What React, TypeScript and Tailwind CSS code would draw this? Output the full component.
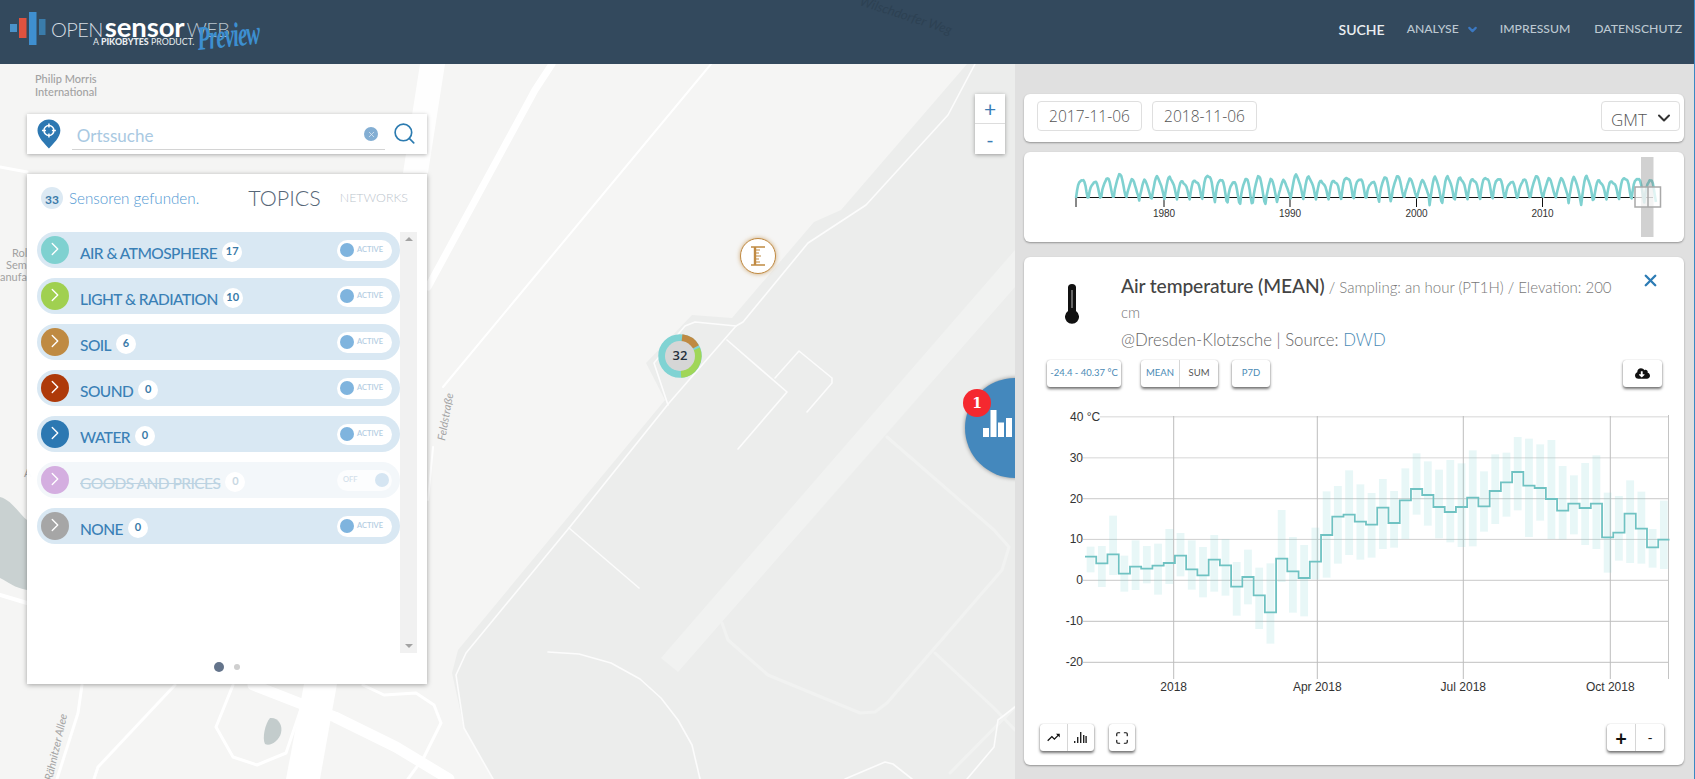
import React from 'react';
import { ChevronDown, ChevronRight, Maximize, Search, X } from 'lucide-react';
import { FaCloudDownloadAlt } from 'react-icons/fa';
import { MdTrendingUp } from 'react-icons/md';

const topics = [
  { name: 'AIR & ATMOSPHERE', count: 17, color: '#7fd1d0' },
  { name: 'LIGHT & RADIATION', count: 10, color: '#a0d050' },
  { name: 'SOIL', count: 6, color: '#bf8a42' },
  { name: 'SOUND', count: 0, color: '#ae3a0a' },
  { name: 'WATER', count: 0, color: '#2c78b2' },
  { name: 'GOODS AND PRICES', count: 0, color: '#d4aee0', off: true },
  { name: 'NONE', count: 0, color: '#a6a6a6' },
];

// values read off the reference, in zoomed pixels (y = 410 + v / 3)
const steps = [437, 457, 430, 488, 467, 473, 464, 456, 434, 475, 493, 446, 463, 527, 498, 553, 604, 443, 481, 501, 452, 372, 317, 311, 332, 341, 290, 336, 268, 234, 252, 288, 303, 288, 260, 286, 240, 214, 183, 224, 231, 264, 299, 278, 291, 278, 379, 365, 308, 353, 409, 386];
const ranges = [[407, 484], [405, 528], [314, 492], [434, 542], [388, 537], [405, 517], [398, 551], [354, 519], [366, 496], [388, 536], [408, 559], [372, 542], [384, 554], [453, 614], [416, 580], [470, 654], [457, 698], [297, 513], [378, 605], [402, 616], [350, 505], [241, 500], [225, 458], [178, 432], [220, 446], [246, 440], [204, 414], [240, 410], [172, 384], [127, 311], [151, 344], [176, 382], [147, 394], [157, 408], [118, 406], [181, 362], [130, 339], [125, 317], [78, 298], [83, 378], [100, 329], [87, 384], [165, 385], [193, 370], [156, 402], [133, 414], [245, 485], [255, 449], [208, 456], [242, 458], [354, 470], [269, 474]];

const binX = (i: number) => 1085 + i * 11.24;
const zy = (v: number) => 410 + v / 3;

const stepPath = () => {
  let d = `M${binX(0)} ${zy(steps[0])}`;
  steps.forEach((v, i) => {
    d += ` V${zy(v)} H${binX(i + 1)}`;
  });
  return d;
};

const overviewPath = () => {
  const deep: Record<number, number> = { 5: 201, 11: 202, 12: 203, 13: 205, 14: 204, 15: 205, 24: 203, 28: 205, 29: 202, 39: 203, 40: 204, 45: 203 };
  // one yearly hump, as fractions of its height, month by month
  const shape = [0, 0.35, 0.6, 0.8, 0.92, 1, 0.95, 0.9, 0.78, 0.6, 0.35, 0.1];
  const pts: string[] = [];
  for (let y = 0; y < 46; y++) {
    const peak = 179 + 2.5 * Math.sin(y * 1.7) + (y % 7 === 3 ? -2 : 0) + (y === 30 ? -3 : 0);
    const low = deep[y] || 198;
    shape.forEach((s, m) => {
      const jitter = Math.sin(y * 12 + m * 5.3) * 1.4;
      pts.push(`${(1076 + (y + m / 12) * 12.63).toFixed(1)},${(low + (peak - low) * s + jitter).toFixed(1)}`);
    });
  }
  return pts.join(' ');
};

const Logo = () => (
  <div className="relative flex items-center h-16 w-[300px]">
    <svg width="46" height="64" viewBox="0 0 46 64" className="absolute left-0 top-0">
      <rect x="10" y="24" width="7" height="8" fill="#4a92c9" />
      <rect x="19" y="18" width="7.5" height="20" fill="#e0523f" />
      <rect x="29" y="12" width="7.5" height="33" fill="#3f8fd0" />
      <rect x="39" y="19" width="6.5" height="16" fill="#3a7cab" />
    </svg>
    <div className="absolute left-[51px] top-[12px] flex items-baseline text-white font-['Lato',sans-serif] whitespace-nowrap">
      <span className="text-[20px] font-light text-[#d5dde3] tracking-[-0.6px]">OPEN</span>
      <span className="ml-[2px] text-[27.5px] font-bold leading-[30px] tracking-[-0.1px]">sensor</span>
      <span className="ml-[2px] text-[20px] font-light text-[#b9c5ce] tracking-[-0.6px]">WEB</span>
    </div>
    <div className="absolute left-[93px] top-[36px] text-[8.8px] leading-[12px] text-[#e8edf0] font-['Lato',sans-serif] whitespace-nowrap">
      A <b className="font-black">PIKOBYTES</b> PRODUCT.
    </div>
    <div className="absolute left-[197px] top-[20px] origin-left text-[34px] leading-[38px] text-[#3d8fd0] font-['Liberation_Serif',serif] italic font-bold tracking-[-1.5px] scale-x-[0.62] -rotate-6 whitespace-nowrap">
      Preview
    </div>
  </div>
);

const Header = () => (
  <header className="relative h-16 shrink-0 bg-[#33495d] flex items-start justify-between pl-0 pr-[13px] font-['Lato',sans-serif] overflow-hidden">
    <Logo />
    <span className="absolute left-[858px] top-[6px] rotate-[18deg] text-[13px] italic text-[#2d4153]">Wilschdorfer Weg</span>
    <nav className="flex items-center h-[58px] text-[12.2px] font-medium text-[#bcc8d1] whitespace-nowrap">
      <span className="text-[14px] text-[#eaeef1] font-semibold">SUCHE</span>
      <span className="ml-[22px]">ANALYSE</span>
      <ChevronDown size={13} strokeWidth={4} className="ml-[7px] mt-[1px] text-[#3b78c2]" />
      <span className="ml-[21px]">IMPRESSUM</span>
      <span className="ml-[24px]">DATENSCHUTZ</span>
    </nav>
  </header>
);

const MapBackground = () => (
  <svg viewBox="0 64 1015 715" width="1015" height="715" className="absolute inset-0" fill="none" strokeLinejoin="round" strokeLinecap="round">
    <rect x="0" y="64" width="1015" height="715" fill="#f5f5f4" />
    <polygon points="967,64 841,210 814,222 732,318 692,315 646,363 665,400 458,650 452,673 464,728 493,779 1015,779 1015,64" fill="#ecedec" />
    <polygon points="661,658 678,672 1015,287 1015,250" fill="#f1f2f1" />
    <g stroke="#f1f2f1" strokeWidth="3">
      <polyline points="722,623 728,640 768,675 860,713 875,712 887,703 1002,570 1009,547 994,530 887,437" />
      <polyline points="935,653 994,708 1015,730" />
      <polyline points="950,773 1015,707" />
    </g>
    <g stroke="#fcfcfc" strokeWidth="1.6">
      <polyline points="975,64 948,115 866,205 808,243 743,322 736,326 669,403 569,528 466,653 456,675 464,728 493,779" />
      <polyline points="736,326 695,322 685,326 654,363 668,405" />
      <polyline points="727,340 787,392 738,449" />
      <polyline points="775,378 799,351 832,378 832,383 807,412" />
      <polyline points="569,528 639,588" />
      <polyline points="548,652 579,654 611,663 640,679 661,698 678,720 692,745 700,779" />
      <polyline points="845,779 885,762 893,764 912,779" />
      <polyline points="1015,707 998,720 994,747 967,779" />
    </g>
    <g stroke="#ffffff" strokeWidth="2">
      <polyline points="711,64 443,387" />
      <polyline points="433,447 428,500" />
      <polyline points="0,167 27,172" strokeWidth="3" />
      <polyline points="0,595 27,603" strokeWidth="4" />
      <polyline points="82,685 78,713 57,779" strokeWidth="3" />
      <polyline points="175,685 98,767 94,779" strokeWidth="3" />
      <polyline points="233,685 216,727 233,757 257,765 286,753 304,700" strokeWidth="3" />
      <polyline points="363,685 384,695 416,693 434,705 441,723 424,757 408,779" strokeWidth="3" />
    </g>
    <polygon points="420,64 445,64 428,173 403,173" fill="#ffffff" opacity="0.9" />
    <polyline points="552,64 535,90 428,287" stroke="#ffffff" strokeWidth="7" />
    <polygon points="304,684 337,684 320,779 286,779" fill="#ffffff" />
    <polyline points="253,685 335,717 396,747 449,779" stroke="#ffffff" strokeWidth="11" />
    <path d="M0 497 C12 500 20 515 27 520 L27 590 C15 588 8 582 0 578 Z" fill="#c9d1d1" />
    <path d="M270 718 C278 717 283 725 281 733 C279 741 270 747 265 744 C262 738 265 724 270 718 Z" fill="#c3cccc" />
    <g fontFamily="'Lato',sans-serif" fontSize="11" fill="#a2a2a2">
      <text x="35" y="83" fontWeight="500">Philip Morris</text>
      <text x="35" y="96" fontWeight="500">International</text>
      <text x="12" y="257">Rol</text>
      <text x="6" y="269">Sem</text>
      <text x="0" y="281">anufa</text>
      <text x="24" y="477">A</text>
      <text transform="translate(445 441) rotate(-80)" fontStyle="italic" fill="#a4a4a4">Feldstraße</text>
      <text transform="translate(52 781) rotate(-77)" fontStyle="italic" fill="#a4a4a4">Rähnitzer Allee</text>
    </g>
  </svg>
);

const PinIcon = () => (
  <svg width="24" height="30" viewBox="0 0 24 30">
    <path d="M12 0.5 C18.5 0.5 23.5 5.5 23.5 11.5 C23.5 18.5 16 25 12 29.5 C8 25 0.5 18.5 0.5 11.5 C0.5 5.5 5.5 0.5 12 0.5 Z" fill="#2d78b2" />
    <circle cx="12" cy="11.5" r="5" fill="none" stroke="#fff" strokeWidth="1.5" />
    <path d="M12 4.5 V8.5 M12 14.5 V18.5 M5 11.5 H9 M15 11.5 H19" stroke="#fff" strokeWidth="1.5" />
  </svg>
);

const SearchBox = () => (
  <div className="absolute left-[27px] top-[50px] w-[400px] h-10 bg-white shadow-[0_1px_4px_rgba(0,0,0,0.3)] flex items-start pl-[10px] pr-[10px] pt-[5px]">
    <PinIcon />
    <div className="ml-[11px] w-[315px] h-[31px] border-b border-[#d4d4d4] flex items-center justify-between pl-[5px] pr-[7px]">
      <span className="text-[17px] text-[#a9c9e2] font-['Lato',sans-serif] pt-[3px]">Ortssuche</span>
      <span className="w-[14px] h-[14px] rounded-full bg-[#83aed3] flex items-center justify-center">
        <X size={9} strokeWidth={2} className="text-[#dfeaf3]" />
      </span>
    </div>
    <Search size={25} strokeWidth={1.6} className="ml-[7px] mt-[2px] text-[#2c7bb0]" />
  </div>
);

const TopicRow = ({ name, count, color, off }: { name: string; count: number; color: string; off?: boolean }) => (
  <div className={`h-9 rounded-full flex items-center pl-1 pr-2 ${off ? 'bg-[#f3f7fa]' : 'bg-[#d9e8f3]'}`}>
    <span className="w-7 h-7 rounded-full flex items-center justify-center shrink-0 pr-[1px] -mt-[1px]" style={{ backgroundColor: color }}>
      <ChevronRight size={22} strokeWidth={1.5} className="text-white -mt-[2px]" />
    </span>
    <span className={`ml-[11px] mt-[7px] text-[15.5px] font-medium tracking-[-0.55px] whitespace-nowrap ${off ? 'text-[#bcd3e2] line-through' : 'text-[#3a80b6]'}`}>{name}</span>
    <span className={`ml-[5px] mt-[3px] w-5 h-5 rounded-full bg-white flex items-center justify-center text-[11px] font-bold ${off ? 'text-[#c9d8e3]' : 'text-[#3a7aa8]'}`}>{count}</span>
    {off ? (
      <span className="ml-auto w-[55px] h-[21px] rounded-full bg-white/70 flex items-center justify-between pl-[6px] pr-[3px]">
        <span className="text-[7.5px] font-semibold text-[#d3e0ea]">OFF</span>
        <span className="w-[14px] h-[14px] rounded-full bg-[#d5e5f2]" />
      </span>
    ) : (
      <span className="ml-auto w-[55px] h-[21px] rounded-full bg-white flex items-center pl-[3px]">
        <span className="w-[14px] h-[14px] rounded-full bg-[#7fb4de]" />
        <span className="ml-[3px] text-[7.5px] font-semibold text-[#b3cde2]">ACTIVE</span>
      </span>
    )}
  </div>
);

const TopicsPanel = () => (
  <div className="absolute left-[27px] top-[110px] w-[400px] h-[510px] bg-white/[0.97] shadow-[0_1px_5px_rgba(0,0,0,0.35)] font-['Lato',sans-serif] flex flex-col">
    <div className="h-12 mb-[10px] flex items-center pl-[14px] whitespace-nowrap">
      <span className="w-[22px] h-[22px] rounded-full bg-[#dce9f3] flex items-center justify-center text-[12px] font-bold text-[#3a7aa8] pt-[3px]">33</span>
      <span className="ml-[6px] text-[15.2px] font-light text-[#4f97d2]">Sensoren gefunden.</span>
      <span className="ml-[49px] text-[21.5px] font-light text-[#566677]">TOPICS</span>
      <span className="ml-[19px] text-[12.4px] font-light text-[#bcc5cd]">NETWORKS</span>
    </div>
    <div className="flex pl-[10px] pr-[10px]">
      <div className="w-[363px] flex flex-col gap-[10px]">
        {topics.map((t) => (
          <TopicRow key={t.name} {...t} />
        ))}
      </div>
      <div className="w-[17px] h-[421px] bg-[#f1f1f1] flex flex-col items-center justify-between py-[5px]">
        <span className="w-0 h-0 border-x-[4px] border-x-transparent border-b-[4px] border-b-[#a3a3a3]" />
        <span className="w-0 h-0 border-x-[4px] border-x-transparent border-t-[4px] border-t-[#a3a3a3]" />
      </div>
    </div>
    <div className="flex-1 flex items-center justify-center gap-[10px] pb-[4px]">
      <span className="w-[10px] h-[10px] rounded-full bg-[#64748b]" />
      <span className="w-[6px] h-[6px] rounded-full bg-[#cfcfcf]" />
    </div>
  </div>
);

const Markers = () => (
  <>
    <div className="absolute left-[740px] top-[174px] w-9 h-9 rounded-full bg-white border border-[#c08a42] shadow-[0_0_4px_rgba(192,138,66,0.7)] flex items-center justify-center">
      <svg width="16" height="20" viewBox="0 0 16 20" stroke="#c08a42" fill="none">
        <path d="M1 1 H15 M1 19 H15" strokeWidth="1.6" />
        <path d="M5 1 V19" strokeWidth="2.4" />
        <path d="M6 4 H10 M6 7 H9 M6 10 H11 M6 13 H9 M6 16 H10" strokeWidth="1.2" />
      </svg>
    </div>
    <div className="absolute left-[658px] top-[270px] w-11 h-11">
      <svg width="44" height="44" viewBox="0 0 44 44" fill="none" strokeWidth="7.5">
        <circle cx="22" cy="22" r="18" stroke="#80d3d3" />
        <path d="M24 4.1 A18 18 0 0 1 37.6 13" stroke="#bf8a42" />
        <path d="M38.3 15 A18 18 0 0 1 23 40" stroke="#a0d658" />
      </svg>
      <span className="absolute inset-[7px] rounded-full bg-[#d6d6d6] flex items-center justify-center text-[13px] font-semibold text-[#24303c] font-['Open_Sans',sans-serif]">32</span>
    </div>
    <div className="absolute left-[965px] top-[314px] w-[100px] h-[100px] rounded-full bg-[#4488bd] shadow-[0_0_4px_rgba(0,0,0,0.4)]">
      <svg width="32" height="28" viewBox="0 0 32 28" fill="#fff" className="absolute left-[18px] top-[32px]">
        <rect x="0" y="18" width="6" height="9" />
        <rect x="7.5" y="0" width="6" height="27" />
        <rect x="15" y="12.5" width="6" height="14.5" />
        <rect x="23" y="8" width="6" height="19" />
      </svg>
    </div>
    <span className="absolute left-[963px] top-[325px] w-7 h-7 rounded-full bg-[#f5282f] flex items-center justify-center text-white text-[14px] font-bold font-['DejaVu_Serif',serif]">1</span>
    <div className="absolute left-[975px] top-[30px] w-[30px] h-[60px] bg-white shadow-[0_1px_4px_rgba(0,0,0,0.35)] flex flex-col text-[#3a7cb5] font-['Lato',sans-serif]">
      <span className="h-[30px] border-b border-[#dddddd] flex items-center justify-center text-[21px]">+</span>
      <span className="flex-1 flex items-center justify-center text-[20px]">-</span>
    </div>
  </>
);

const Card = ({ className, children }: { className: string; children: React.ReactNode }) => (
  <div className={`bg-white rounded-[6px] shadow-[0_1px_2px_rgba(0,0,0,0.35)] ${className}`}>{children}</div>
);

const DateBar = () => (
  <Card className="h-12 flex items-start pt-[7px] pl-[13px] pr-[4px] font-['Open_Sans',sans-serif] font-light text-[#555]">
    <span className="w-[105px] h-[30px] border border-[#dfdfdf] rounded-[4px] flex items-center justify-center pt-[2px] text-[15.5px]">2017-11-06</span>
    <span className="ml-[10px] w-[105px] h-[30px] border border-[#dfdfdf] rounded-[4px] flex items-center justify-center pt-[2px] text-[15.5px]">2018-11-06</span>
    <span className="ml-auto w-[79px] h-[30px] border border-[#dfdfdf] rounded-[4px] flex items-center justify-center gap-[7px] pl-[4px] pt-[7px] text-[17px]">
      GMT
      <ChevronDown size={20} strokeWidth={2.4} className="text-[#333] -mt-[4px]" />
    </span>
  </Card>
);

const Overview = () => (
  <Card className="h-[90px]">
    <svg viewBox="1024 152 660 90" width="660" height="90" fill="none">
      <path d="M1076 197.5 H1653 M1076 197.5 V207 M1164 197.5 V207 M1290 197.5 V207 M1416.5 197.5 V207 M1542.5 197.5 V207" stroke="#111" strokeWidth="1" />
      <polyline points={overviewPath()} stroke="#7fd1d0" strokeWidth="2.6" strokeLinejoin="round" />
      <g fontFamily="'Liberation Sans',sans-serif" fontSize="10" fill="#333" textAnchor="middle">
        <text x="1164" y="217">1980</text>
        <text x="1290" y="217">1990</text>
        <text x="1416.5" y="217">2000</text>
        <text x="1542.5" y="217">2010</text>
      </g>
      <rect x="1641" y="157" width="12.5" height="80" fill="#7a7a7a" opacity="0.35" />
      <rect x="1635" y="187" width="25.5" height="20" fill="#ffffff" fillOpacity="0.75" stroke="#a9a9a9" strokeWidth="1.5" />
      <path d="M1648 187 V207" stroke="#a9a9a9" strokeWidth="1.5" />
    </svg>
  </Card>
);

const Thermometer = () => (
  <svg width="14" height="40" viewBox="0 0 14 40">
    <path d="M3 3.5 A4 3.5 0 0 1 11 3.5 V27 A7 7 0 1 1 3 27 Z" fill="#111" />
    <path d="M7 6 V24" stroke="#cfcfcf" strokeWidth="0.9" />
  </svg>
);

const ChartButton = ({ className, children }: { className: string; children: React.ReactNode }) => (
  <div className={`h-[27px] bg-white rounded-[3px] shadow-[0_2px_3px_rgba(0,0,0,0.55),0_0_1px_rgba(0,0,0,0.3)] flex items-center justify-center ${className}`}>{children}</div>
);

const Chart = () => {
  const yTicks = [
    { label: '30', y: 456.7, c: '#e4e4e4', w: 1.5 },
    { label: '20', y: 497.7, c: '#d4d4d4', w: 1.2 },
    { label: '10', y: 538.4, c: '#cfcfcf', w: 1 },
    { label: '0', y: 579.3, c: '#c8c8c8', w: 1 },
    { label: '-10', y: 620.3, c: '#c0c0c0', w: 1 },
    { label: '-20', y: 661.3, c: '#c0c0c0', w: 1 },
  ];
  const xTicks = [
    { label: '2018', x: 1173.7 },
    { label: 'Apr 2018', x: 1317.3 },
    { label: 'Jul 2018', x: 1463.3 },
    { label: 'Oct 2018', x: 1610.3 },
  ];
  return (
    <svg viewBox="1024 400 660 300" width="660" height="300" fill="none" className="mt-[14px]">
      <path d="M1100 415.7 H1668" stroke="#e4e4e4" strokeWidth="1.5" />
      {yTicks.map((t) => (
        <path key={t.label} d={`M1083 ${t.y} H1668`} stroke={t.c} strokeWidth={t.w} />
      ))}
      {xTicks.map((t) => (
        <path key={t.label} d={`M${t.x} 415 V678`} stroke="#bdbdbd" />
      ))}
      <path d="M1668.5 414 V678" stroke="#c4c4c4" />
      {ranges.map(([a, b], i) => (
        <rect key={i} x={binX(i) + 1.7} y={zy(a)} width="7.8" height={(b - a) / 3} fill="#7fd1d0" opacity="0.18" />
      ))}
      <path d={stepPath()} stroke="#6fc2c2" strokeWidth="1.8" />
      <g fontFamily="'Liberation Sans',sans-serif" fontSize="12" fill="#333">
        <text x="1070" y="420">40 °C</text>
        {yTicks.map((t) => (
          <text key={t.label} x="1083" y={t.y + 4} textAnchor="end">{t.label}</text>
        ))}
        {xTicks.map((t) => (
          <text key={t.label} x={t.x} y="690" textAnchor="middle">{t.label}</text>
        ))}
      </g>
    </svg>
  );
};

const DetailCard = () => (
  <Card className="h-[508px] relative flex flex-col font-['Lato',sans-serif]">
    <div className="flex pl-[41px] pt-[16px] h-[103px]">
      <div className="mt-[11px]"><Thermometer /></div>
      <div className="ml-[42px] w-[495px] leading-[25px] text-[#777]">
        <div className="text-[15px] font-light">
          <span className="text-[19.2px] font-medium text-[#444] tracking-[-0.1px]">Air temperature (MEAN)</span> / Sampling: an hour (PT1H) / Elevation: 200 cm
        </div>
        <div className="mt-[2px] text-[16.8px] font-light text-[#666]">
          @Dresden-Klotzsche | Source: <span className="text-[#4a8ab5]">DWD</span>
        </div>
      </div>
      <X size={19} strokeWidth={3} className="absolute left-[617px] top-[14px] text-[#2d7cb5]" />
    </div>
    <div className="flex pl-[23px] pr-[22px] text-[9.5px] font-['Lato',sans-serif]">
      <ChartButton className="w-[74px] text-[#4a8ab5]">-24.4 - 40.37 °C</ChartButton>
      <ChartButton className="ml-[20px] w-[77px]">
        <span className="flex-1 h-full flex items-center justify-center border-r border-[#d6d6d6] text-[#4a8ab5]">MEAN</span>
        <span className="flex-1 text-center text-[#555]">SUM</span>
      </ChartButton>
      <ChartButton className="ml-[14px] w-[38px] text-[#4a8ab5]">P7D</ChartButton>
      <ChartButton className="ml-auto w-[39px]"><FaCloudDownloadAlt size={15} className="text-[#111]" /></ChartButton>
    </div>
    <Chart />
    <div className="flex pl-4 pr-5 mt-[23px]">
      <ChartButton className="w-[54px]">
        <span className="flex-1 h-full flex items-center justify-center border-r border-[#d6d6d6]"><MdTrendingUp size={15} className="text-[#111]" /></span>
        <span className="flex-1 flex items-center justify-center">
          <svg width="13" height="11" viewBox="0 0 13 11" fill="#222"><path d="M0 9h1.4v2H0zM3 5h1.4v6H3zM6 0h1.4v11H6zM9 3h1.4v8H9zM11.4 4h1.4v7h-1.4z" /></svg>
        </span>
      </ChartButton>
      <ChartButton className="ml-[15px] w-[26px]"><Maximize size={14} strokeWidth={2} className="text-[#111]" /></ChartButton>
      <ChartButton className="ml-auto w-[57px] text-[#111]">
        <span className="flex-1 h-full flex items-center justify-center border-r border-[#d6d6d6] text-[20px] font-bold">+</span>
        <span className="flex-1 text-center text-[14px]">-</span>
      </ChartButton>
    </div>
  </Card>
);

export default function App() {
  return (
    <div className="relative w-[1695px] h-[779px] overflow-hidden flex flex-col bg-[#e0e0e0]">
      <Header />
      <main className="flex flex-1">
        <section className="relative w-[1015px] h-[715px] overflow-hidden">
          <MapBackground />
          <Markers />
          <SearchBox />
          <TopicsPanel />
        </section>
        <aside className="w-[680px] pl-[9px] pr-[11px] pt-[30px] flex flex-col">
          <DateBar />
          <div className="mt-[10px]"><Overview /></div>
          <div className="mt-[15px]"><DetailCard /></div>
        </aside>
      </main>
      <div className="absolute inset-y-0 right-0 w-[1px] bg-[#3b88c3]" />
    </div>
  );
}
